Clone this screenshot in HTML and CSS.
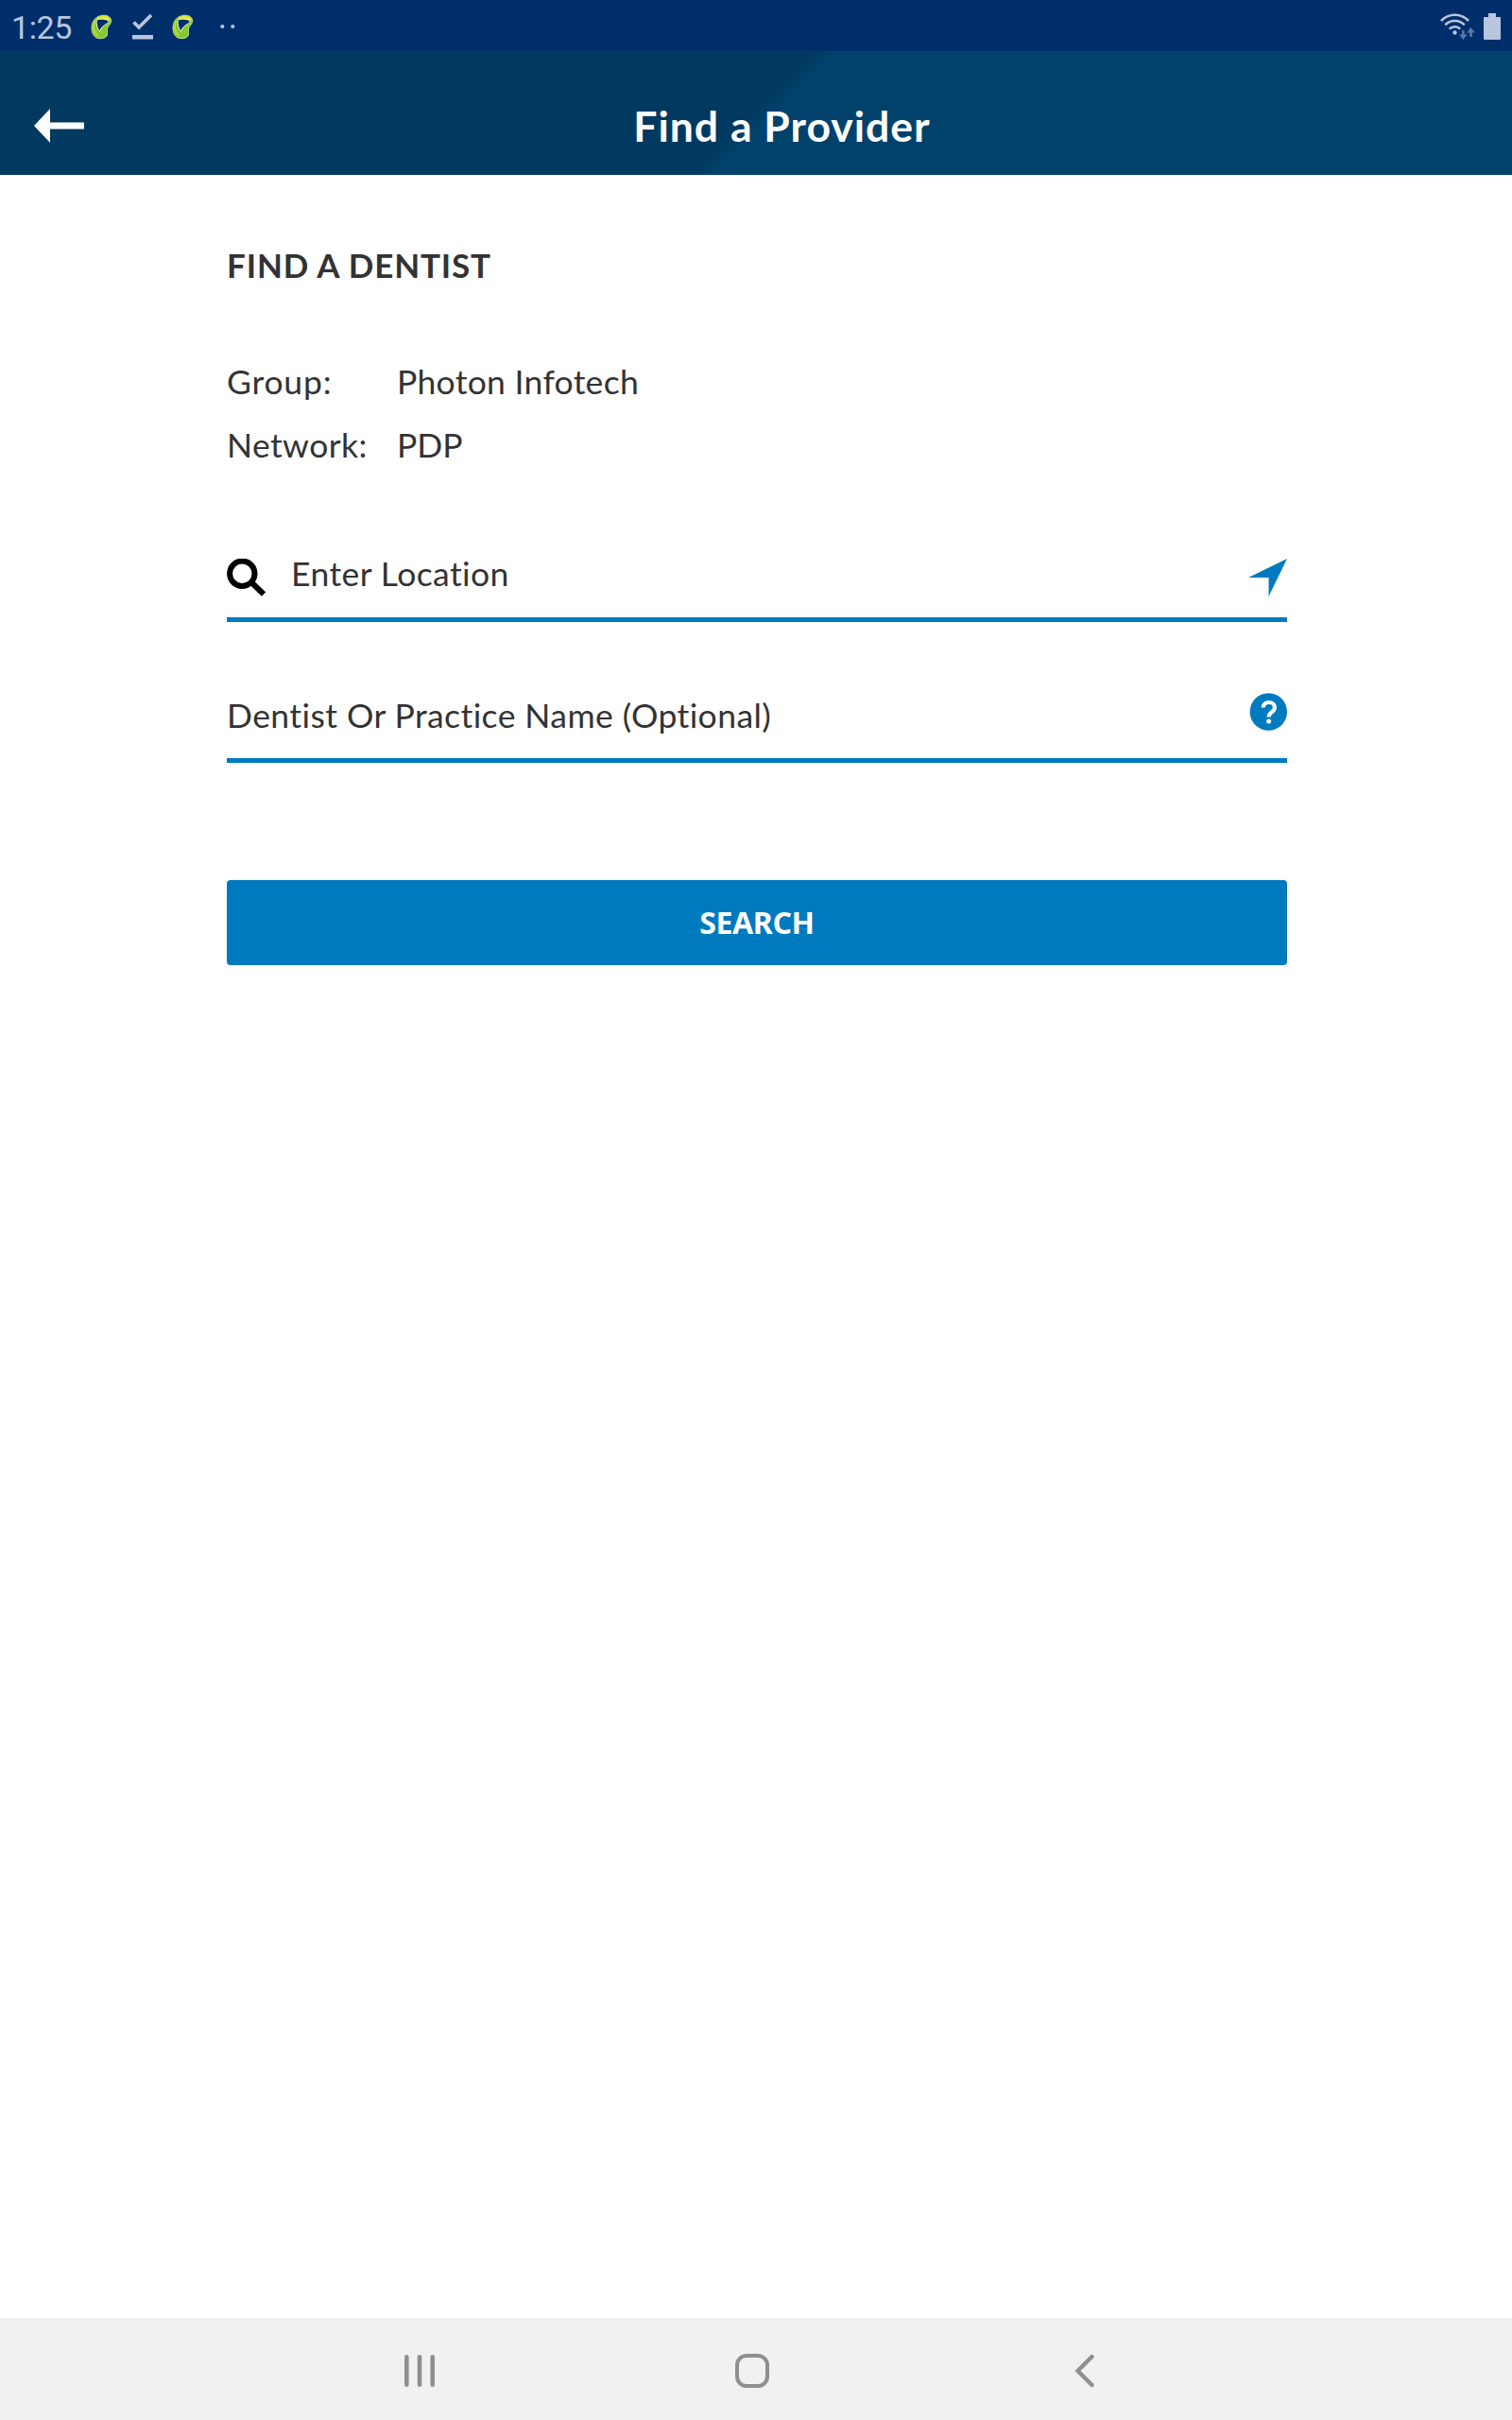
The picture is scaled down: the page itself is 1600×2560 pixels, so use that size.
FILE: index.html
```html
<!DOCTYPE html>
<html lang="en">
<head>
<meta charset="utf-8">
<title>Find a Provider</title>
<link rel="stylesheet" href="styles.css">
</head>
<body>
<div class="screen">
  <div class="status">
    <span class="clock">1:25</span>
    <svg class="leaf" width="24" height="28" viewBox="0 0 24 28"><path d="M8 3.500C13 1 20 2 21.500 6.500 22.500 11 18.500 13 17.500 16c-.5 3 .8 5.500-.5 8-1.500 2.600-6 3.200-9.500 2.400C3.500 25.500 1 21 1 16 1 10 3.500 5.500 8 3.500Z" fill="#85c832" stroke="#dfee9a" stroke-width=".8"/><path d="M7 4.200C13 1.500 20 2.300 21 6.500L18.500 8C15 5.500 11 5.500 7 6.800Z" fill="#dde83a"/><path d="M6.300 6.800c4-1 9-1 13 1-.8 4.700-8 4-9.700 11.700C7.200 16.500 5.500 12 6.300 6.800Z" fill="#002e6b" stroke="#eef5c8"/><path d="M4.500 8c-2.500 6-1.500 12 3 16" fill="none" stroke="#bede35" stroke-width="1.600"/></svg>
    <svg class="check" width="24" height="28" viewBox="0 0 24 28"><path d="M2.500 9.500 8 15 21 2" fill="none" stroke="#b9c5dc" stroke-width="3.700"/><path d="M1 23h22v4.500H1z" fill="#b9c5dc"/></svg>
    <svg class="leaf second" width="24" height="28" viewBox="0 0 24 28"><path d="M8 3.500C13 1 20 2 21.500 6.500 22.500 11 18.500 13 17.500 16c-.5 3 .8 5.500-.5 8-1.500 2.600-6 3.200-9.500 2.400C3.500 25.500 1 21 1 16 1 10 3.500 5.500 8 3.500Z" fill="#85c832" stroke="#dfee9a" stroke-width=".8"/><path d="M7 4.200C13 1.500 20 2.300 21 6.500L18.500 8C15 5.500 11 5.500 7 6.800Z" fill="#dde83a"/><path d="M6.300 6.800c4-1 9-1 13 1-.8 4.700-8 4-9.700 11.700C7.200 16.500 5.500 12 6.300 6.800Z" fill="#002e6b" stroke="#eef5c8"/><path d="M4.500 8c-2.500 6-1.500 12 3 16" fill="none" stroke="#bede35" stroke-width="1.600"/></svg>
    <svg class="dots" width="16" height="28" viewBox="0 0 16 28"><circle cx="2.300" cy="14" r="2.100" fill="#b9c5dc"/><circle cx="13.300" cy="14" r="2.100" fill="#b9c5dc"/></svg>
    <svg class="wifi" width="38" height="28" viewBox="0 0 38 28"><g fill="none" stroke="#b9c5dc" stroke-width="2.600"><path d="M1 8a20 20 0 0 1 29 0"/><path d="M5.300 12.400a14 14 0 0 1 20.400 0"/><path d="M9.700 16.600a8.400 8.400 0 0 1 11.600 0"/></g><circle cx="15.500" cy="20.500" r="2.200" fill="#b9c5dc"/><path d="M24.300 18v7M32.500 25v-7" stroke="#5677ab" stroke-width="2.600" fill="none"/><path d="M20 22.500h8.600L24.300 28ZM28.200 20.500h8.600L32.500 15Z" fill="#5677ab"/></svg>
    <svg class="battery" width="18" height="28" viewBox="0 0 18 28"><path d="M5 0h8v4h4q1 0 1 1v22q0 1-1 1H1q-1 0-1-1V5q0-1 1-1h4Z" fill="#b9c5dc"/></svg>
  </div>
  <header class="appbar">
    <svg class="back" width="53" height="36" viewBox="0 0 53 36"><path d="M0 18 17 0v14.500h36v7H17V36Z" fill="#fff"/></svg>
    <h1 class="title">Find a Provider</h1>
  </header>
  <main class="content">
    <h2 class="heading">FIND A DENTIST</h2>
    <dl class="details">
      <dt class="group">Group:</dt><dd class="group-name">Photon Infotech</dd>
      <dt class="network">Network:</dt><dd class="network-name">PDP</dd>
    </dl>
    <div class="field location">
      <svg class="search-icon" width="41" height="41" viewBox="0 0 41 41"><circle cx="16.300" cy="15.700" r="13.200" fill="none" stroke="#000" stroke-width="6"/><path d="m25 24 14 13.500" stroke="#000" stroke-width="6"/></svg>
      <span class="label">Enter Location</span>
      <svg class="locate" width="41" height="41" viewBox="0 0 41 41"><path d="M41 0 21.500 40V20H0Z" fill="#007abf"/></svg>
    </div>
    <div class="field practice">
      <span class="label">Dentist Or Practice Name (Optional)</span>
      <svg class="help" width="40" height="40" viewBox="0 0 40 40"><circle cx="20.300" cy="20" r="19.700" fill="#007abf"/><path d="M14.600 15.500c0-7.500 12.300-7 12.300-.3 0 5.200-6.300 5-6.300 10.300" fill="none" stroke="#fff" stroke-width="4.200"/><circle cx="20.600" cy="30" r="2.500" fill="#fff"/></svg>
    </div>
    <button class="search" type="button"><span class="search-text">SEARCH</span></button>
  </main>
  <nav class="navbar">
    <svg width="36" height="40" viewBox="0 0 36 40"><path d="M4.300 5.300v29.400M18 5.300v29.400M31.700 5.300v29.400" stroke="#8f8f8f" stroke-width="4.600" stroke-linecap="round"/></svg>
    <svg class="home" width="40" height="40" viewBox="0 0 40 40"><rect x="4" y="4" width="32" height="32" rx="10" fill="none" stroke="#8f8f8f" stroke-width="4"/></svg>
    <svg width="30" height="40" viewBox="0 0 30 40"><path d="M22.500 5 7.500 20l15 15" fill="none" stroke="#8f8f8f" stroke-width="4.400" stroke-linecap="round"/></svg>
  </nav>
</div>
</body>
</html>
```
FILE: styles.css
```css
* { box-sizing: border-box; }
body { margin: 0; background: #fff; color: #333; font-family: Lato, sans-serif; }
svg { display: block; flex: none; }
.screen { width: 1600px; height: 2560px; display: flex; flex-direction: column; }

.status { height: 54px; flex: none; display: flex; align-items: flex-start; padding: 14px 12px 0; background: #002e6b; }
.clock { width: 84px; padding-top: 1px; font: 34px/28px Roboto, sans-serif; letter-spacing: -0.4px; color: #b9c5dc; white-space: nowrap; }
.check { margin-left: 19px; }
.second { margin-left: 19px; }
.dots { margin-left: 27px; }
.wifi { margin-left: auto; }
.battery { margin-left: 8px; }

.appbar { height: 131px; flex: none; display: grid; grid-template-columns: 53px 1fr 53px; padding: 0 36px; background: linear-gradient(135deg, #023960 49.6%, #00426b 51.2%); }
.back { margin-top: 61px; }
.title { margin: 52px 0 0 55px; font-size: 44.5px; line-height: 54px; font-weight: 700; letter-spacing: 1px; text-align: center; color: #fff; white-space: nowrap; }

.content { flex: 1; width: 1122px; margin-left: 240px; padding-top: 73px; font-size: 35.5px; line-height: 44px; }
.heading { margin: 0 0 80px; font-size: 35px; line-height: 44px; font-weight: 700; letter-spacing: 0.85px; }
.details { margin: 0; display: grid; grid-template-columns: 180px 1fr; row-gap: 23px; }
.details dt, .details dd { margin: 0; white-space: nowrap; }
.group { letter-spacing: 0.8px; }
.network { letter-spacing: 0.4px; }
.group-name { letter-spacing: 0.3px; }
.field { display: flex; align-items: flex-start; justify-content: space-between; border-bottom: 5px solid #007abf; }
.location { height: 73px; margin-top: 92px; }
.practice { height: 72px; margin-top: 77px; }
.location .label { flex: 1; margin-left: 27px; }
.label { letter-spacing: 0.43px; }
.search-icon, .locate { margin-top: 6px; }
.help { margin-top: -2px; }
.search { display: block; width: 100%; height: 90px; margin-top: 124px; padding: 0; border: 0; border-radius: 4px; background: #007abf; color: #fff; font: 700 32px/44px "Noto Sans", sans-serif; letter-spacing: -0.4px; }

.navbar { height: 108px; flex: none; display: grid; grid-template-columns: 350px 357px 30px; align-items: center; padding: 4px 0 0 426px; background: #f1f1f1; }
```
